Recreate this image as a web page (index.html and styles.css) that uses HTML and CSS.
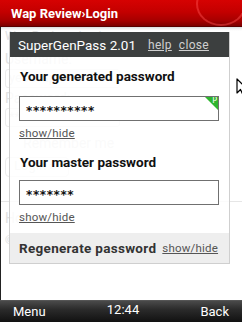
FILE: index.html
```html
<!DOCTYPE html>
<html>
<head>
<meta charset="utf-8">
<link rel="stylesheet" href="styles.css">
</head>
<body>
<div class="screen">
  <header class="topbar">
    <span class="top-title">Wap Review›Login</span>
    <span class="swirl"></span>
  </header>
  <main class="page">
    <div class="backdrop">
      <div class="bg-title">Wap Review · Login</div>
      <div class="bg-label">Username:</div>
      <div class="bg-input">yes wap</div>
      <div class="bg-label">Password:</div>
      <div class="bg-input bg-pass">*******</div>
      <div class="bg-check">Remember me</div>
      <div class="bg-btn">Login »</div>
      <hr class="bg-rule">
      <div class="bg-label">Home</div>
      <div class="bg-small">©2007 WapReview.com</div>
    </div>
    <section class="panel">
      <div class="panel-head">
        <span class="panel-title">SuperGenPass 2.01</span>
        <a class="head-link">help</a>
        <a class="head-link">close</a>
      </div>
      <div class="panel-body">
        <div class="field-label">Your generated password</div>
        <div class="pw-box">
          <span class="pw-text">**********</span>
          <span class="badge"><span class="badge-p">P</span></span>
        </div>
        <a class="toggle">show/hide</a>
        <div class="field-label second">Your master password</div>
        <div class="pw-box master">
          <span class="pw-text">*******</span>
        </div>
        <a class="toggle">show/hide</a>
      </div>
      <div class="panel-foot">
        <span class="regen">Regenerate password</span>
        <a class="toggle small">show/hide</a>
      </div>
    </section>
    <svg class="cursor" width="12" height="20" viewBox="0 0 12 20">
      <path d="M1 1 L1 15 L4.5 11.5 L7 17 L9 16 L6.6 10.6 L11 10.6 Z" fill="#fff" stroke="#000" stroke-width="1.2" stroke-linejoin="round"/>
    </svg>
  </main>
  <footer class="softkeys">
    <span class="sk">Menu</span>
    <span class="sk clock">12:44</span>
    <span class="sk">Back</span>
  </footer>
</div>
</body>
</html>
```
FILE: styles.css
```css
html, body {
  margin: 0;
  padding: 0;
  width: 242px;
  height: 322px;
  overflow: hidden;
  background: #fff;
  font-family: Roboto, "DejaVu Sans", sans-serif;
}
.screen {
  width: 242px;
  height: 322px;
  display: flex;
  flex-direction: column;
}
.topbar {
  height: 27px;
  flex: 0 0 27px;
  box-sizing: border-box;
  position: relative;
  overflow: hidden;
  background: linear-gradient(#d60202 0%, #c40000 45%, #a60000 80%, #7c0000 100%);
  border-bottom: 1px solid #5a0000;
  display: flex;
  align-items: center;
  padding-left: 11px;
}
.top-title {
  color: #fff;
  font-weight: 700;
  font-size: 13px;
  position: relative;
  z-index: 1;
}
.swirl {
  position: absolute;
  right: -4px;
  top: -18px;
  width: 46px;
  height: 40px;
  border-radius: 50%;
  border: 2px solid rgba(255, 80, 80, 0.45);
  border-top-color: transparent;
}
.page {
  flex: 1;
  position: relative;
  overflow: hidden;
  border-left: 1px solid #222;
  background: linear-gradient(#d8dde0 0px, #f4f4f4 2px, #fff 4px);
}
.backdrop {
  padding: 2px 4px 0 4px;
  color: #e2e2e2;
  font-size: 13px;
}
.bg-title {
  font-size: 12px;
  height: 20px;
}
.bg-label {
  font-size: 14px;
  line-height: 16px;
  margin-top: 2px;
}
.bg-input {
  width: 110px;
  height: 17px;
  border: 1px solid #ececec;
  border-radius: 3px;
  margin-top: 2px;
  font-size: 13px;
  padding-left: 3px;
}
.bg-check {
  margin-top: 8px;
  padding-left: 18px;
  font-size: 14px;
}
.bg-btn {
  margin-top: 6px;
  width: 54px;
  height: 18px;
  border: 1px solid #ececec;
  border-radius: 4px;
  padding-left: 8px;
}
.bg-rule {
  border: 0;
  border-top: 1px solid #e6e6e6;
  margin: 24px -4px 8px -4px;
}
.bg-small {
  margin-top: 8px;
  font-size: 11px;
}
.panel {
  position: absolute;
  left: 8px;
  top: 5px;
  width: 219px;
  border: 1px solid #cfcfcf;
  border-top: 0;
  background: rgba(255, 255, 255, 0.82);
}
.panel-head {
  height: 25px;
  background: #3c3f3f;
  display: flex;
  align-items: center;
  padding-left: 8px;
  gap: 7px;
}
.panel-title {
  color: #fff;
  font-size: 13.5px;
  margin-right: 5px;
}
.head-link {
  color: #cfcfcf;
  font-size: 12px;
  letter-spacing: 0.3px;
  text-decoration: underline;
}
.panel-body {
  padding: 10px 10px 9px 9px;
}
.field-label {
  font-weight: 700;
  font-size: 13.5px;
  color: #111;
  line-height: 18px;
  padding-left: 1px;
}
.field-label.second {
  margin-top: 13px;
}
.pw-box {
  position: relative;
  margin-top: 11px;
  height: 23px;
  border: 1px solid #707070;
  background: #fff;
  display: flex;
  align-items: center;
  padding-left: 6px;
  overflow: hidden;
}
.pw-box.master {
  margin-top: 9px;
}
.pw-text {
  font-family: "DejaVu Sans", sans-serif;
  font-size: 12px;
  letter-spacing: 0.6px;
  color: #111;
  font-weight: 700;
  padding-top: 4px;
}
.badge {
  position: absolute;
  right: 0;
  top: 0;
  width: 0;
  height: 0;
  border-top: 13px solid #2fb52f;
  border-left: 13px solid transparent;
}
.badge-p {
  position: absolute;
  right: 1px;
  top: -14px;
  color: #fff;
  font-size: 8px;
  font-family: "DejaVu Sans", sans-serif;
}
.toggle {
  display: block;
  color: #555;
  font-size: 11.5px;
  letter-spacing: 0.2px;
  text-decoration: underline;
  margin-top: 5px;
  line-height: 14px;
}
.panel-foot {
  height: 30px;
  background: #eeeeee;
  display: flex;
  align-items: center;
  padding-left: 9px;
  gap: 6px;
}
.regen {
  font-weight: 700;
  font-size: 13.5px;
  letter-spacing: 0.3px;
  color: #333;
}
.toggle.small {
  display: inline;
  margin-top: 0;
}
.cursor {
  position: absolute;
  left: 235px;
  top: 51px;
}
.softkeys {
  height: 22px;
  flex: 0 0 22px;
  background: linear-gradient(#4a4a4a 0%, #2b2b2b 40%, #111 100%);
  border-top: 1px solid #555;
  box-sizing: border-box;
  display: flex;
  justify-content: space-between;
  align-items: center;
  padding: 0 13px 0 13px;
}
.sk {
  color: #fff;
  font-size: 13px;
}
.clock {
  position: relative;
  top: -2px;
}
```
